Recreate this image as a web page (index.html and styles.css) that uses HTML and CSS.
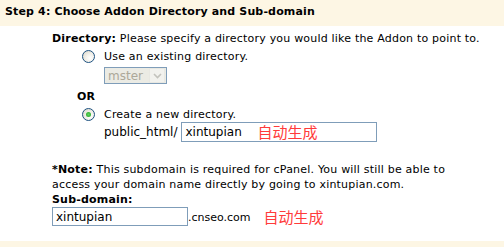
FILE: index.html
```html
<!DOCTYPE html>
<html>
<head>
<meta charset="utf-8">
<link rel="stylesheet" href="styles.css">
</head>
<body>
<div class="step-head">Step 4: Choose Addon Directory and Sub-domain</div>
<div class="content">
  <div class="line"><b>Directory:</b> Please specify a directory you would like the Addon to point to.</div>
  <div class="options">
    <label class="radio-row first"><span class="radio"></span>Use an existing directory.</label>
    <div class="select-row">
      <div class="select"><span class="sel-text">mster</span><span class="sel-btn"><svg width="9" height="6" viewBox="0 0 9 6"><path d="M1 1 L4.5 4.5 L8 1" fill="none" stroke="#c3c3bd" stroke-width="1.6"/></svg></span></div>
    </div>
  </div>
  <div class="or">OR</div>
  <div class="options">
    <label class="radio-row"><span class="radio checked"></span>Create a new directory.</label>
    <div class="path-row">
      <span class="path-label">public_html/</span>
      <span class="input-wrap">
        <span class="input wide">xintupian</span>
        <span class="note-red overlay">自动生成</span>
      </span>
    </div>
  </div>
  <div class="note"><b>*Note:</b> This subdomain is required for cPanel. You will still be able to<br>access your domain name directly by going to xintupian.com.</div>
  <div class="line"><b>Sub-domain:</b></div>
  <div class="sub-row">
    <span class="input narrow">xintupian</span><span class="suffix">.cnseo.com</span><span class="note-red inline">自动生成</span>
  </div>
</div>
<div class="foot-strip"></div>
</body>
</html>
```
FILE: styles.css
```css
html, body {
  margin: 0;
  padding: 0;
  background: #ffffff;
}
body {
  width: 504px;
  height: 247px;
  overflow: hidden;
  font-family: "DejaVu Sans", Verdana, sans-serif;
  font-size: 11px;
  color: #000;
  position: relative;
}
.step-head {
  height: 26px;
  line-height: 23px;
  padding-left: 5px;
  background: #fdf6e4;
  font-weight: bold;
  letter-spacing: 0.15px;
}
.content {
  padding-left: 52px;
  letter-spacing: 0.2px;
}
.line {
  line-height: 15px;
  margin-top: 5px;
}
.options {
  padding-left: 30px;
}
.radio-row {
  display: flex;
  align-items: center;
  height: 16px;
  margin-top: 2px;
}
.radio {
  box-sizing: border-box;
  width: 13px;
  height: 13px;
  border: 1px solid #1c5180;
  border-radius: 50%;
  background: radial-gradient(circle at 65% 65%, #ffffff 0%, #f1efe8 45%, #d6d2c4 100%);
  margin-right: 9px;
  position: relative;
  flex: none;
}
.radio.checked::after {
  content: "";
  position: absolute;
  left: 3px;
  top: 3px;
  width: 5px;
  height: 5px;
  border-radius: 50%;
  background: radial-gradient(circle, #5fd45f 0%, #21a121 100%);
}
.select-row {
  padding-left: 22px;
  margin-top: 3px;
}
.select {
  box-sizing: border-box;
  display: flex;
  align-items: center;
  width: 63px;
  height: 17px;
  border: 1px solid #7f9db9;
  background: #ebebe4;
  color: #aca899;
  font-size: 12px;
  letter-spacing: 0;
}
.sel-text {
  flex: 1;
  padding-left: 3px;
}
.sel-btn {
  box-sizing: border-box;
  width: 16px;
  height: 15px;
  margin-right: 1px;
  border: 1px solid #e8e8e2;
  background: #f2f2ee;
  display: flex;
  align-items: center;
  justify-content: center;
}
.or {
  font-weight: bold;
  line-height: 15px;
  margin-top: 5px;
  padding-left: 25px;
}
.path-row {
  display: flex;
  align-items: center;
  padding-left: 22px;
}
.path-label {
  margin-right: 4px;
  font-size: 12px;
  letter-spacing: 0;
}
.input-wrap {
  position: relative;
  display: block;
}
.input {
  box-sizing: border-box;
  display: flex;
  align-items: center;
  border: 1px solid #7f9db9;
  background: #fff;
  padding-left: 3px;
  font-size: 12px;
  letter-spacing: 0;
}
.input.wide {
  width: 196px;
  height: 20px;
}
.input.narrow {
  width: 136px;
  height: 19px;
}
.note-red {
  font-family: "Noto Sans CJK SC", "DejaVu Sans", sans-serif;
  font-size: 15px;
  color: #ff3b3b;
  line-height: 18px;
  letter-spacing: 0;
}
.note-red.overlay {
  position: absolute;
  left: 76px;
  top: 1px;
}
.note {
  line-height: 15px;
  margin-top: 20px;
}
.note + .line {
  margin-top: 0;
}
.sub-row {
  display: flex;
  align-items: center;
}
.suffix {
  font-size: 11px;
  padding-top: 2px;
  letter-spacing: 0;
}
.note-red.inline {
  margin-left: 13px;
}
.foot-strip {
  position: absolute;
  left: 0;
  right: 0;
  bottom: 0;
  height: 6px;
  background: #fdf6e4;
}
```
